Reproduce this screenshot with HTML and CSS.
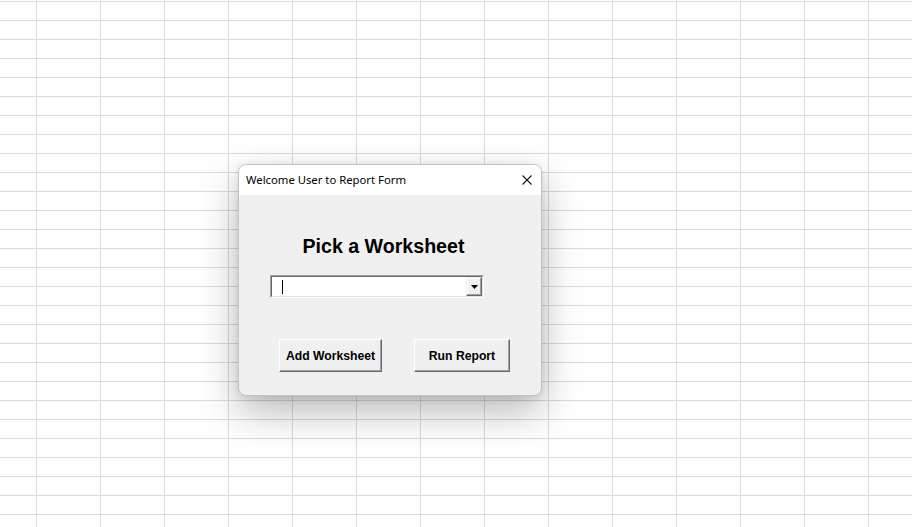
FILE: index.html
```html
<!DOCTYPE html>
<html lang="en">
<head>
<meta charset="utf-8">
<title>Welcome User to Report Form</title>
<link rel="stylesheet" href="styles.css">
</head>
<body>
<div class="sheet"></div>
<div class="dialog">
  <div class="titlebar">
    <span class="title-text">Welcome User to Report Form</span>
    <svg class="close" width="10" height="10" viewBox="0 0 10 10" aria-hidden="true">
      <path d="M0.5 0.5 L9.5 9.5 M9.5 0.5 L0.5 9.5" stroke="#1a1a1a" stroke-width="1.1" fill="none"/>
    </svg>
  </div>
  <div class="body">
    <div class="heading">Pick a Worksheet</div>
    <div class="combo">
      <div class="combo-inner">
        <div class="combo-field"><span class="caret"></span></div>
        <div class="combo-btn">
          <svg width="7" height="4" viewBox="0 0 7 4" aria-hidden="true"><path d="M0 0 H7 L3.5 4 Z" fill="#000"/></svg>
        </div>
      </div>
    </div>
    <div class="buttons">
      <div class="btn btn-add">Add Worksheet</div>
      <div class="btn btn-run">Run Report</div>
    </div>
  </div>
</div>
</body>
</html>
```

FILE: styles.css
```css
html, body {
  margin: 0;
  padding: 0;
  width: 912px;
  height: 527px;
  overflow: hidden;
}
body {
  background-color: #ffffff;
  background-image:
    linear-gradient(to right, #dadada 1px, transparent 1px),
    linear-gradient(to bottom, #dadada 1px, transparent 1px);
  background-size: 64px 19px;
  background-position: 36px 1px;
}
.dialog {
  position: absolute;
  left: 238px;
  top: 164px;
  width: 304px;
  height: 232px;
  box-sizing: border-box;
  border: 1px solid #c2c2c2;
  border-radius: 8px;
  background: #f0f0f0;
  overflow: hidden;
  box-shadow: 0 16px 40px rgba(0, 0, 0, 0.27), 0 2px 8px rgba(0, 0, 0, 0.10);
  display: flex;
  flex-direction: column;
}
.titlebar {
  height: 30px;
  background: #ffffff;
  display: flex;
  align-items: center;
  justify-content: space-between;
  padding: 0 9px 0 7px;
  flex: none;
}
.title-text {
  font-family: "Noto Sans", "Open Sans", sans-serif;
  font-size: 11.3px;
  color: #000;
  line-height: 14px;
}
.close {
  display: block;
}
.body {
  flex: 1;
  display: flex;
  flex-direction: column;
  padding-top: 40px;
}
.heading {
  font-family: "Liberation Sans", Arial, sans-serif;
  font-weight: bold;
  font-size: 19.6px;
  line-height: 23px;
  color: #000;
  text-align: center;
  padding-right: 13px;
}
.combo {
  margin: 17px 0 0 31px;
  width: 214px;
  height: 23px;
  box-sizing: border-box;
  border: 1px solid;
  border-color: #a0a0a0 #ffffff #ffffff #a0a0a0;
}
.combo-inner {
  height: 100%;
  box-sizing: border-box;
  border: 1px solid;
  border-color: #696969 #e3e3e3 #e3e3e3 #696969;
  background: #ffffff;
  display: flex;
}
.combo-field {
  flex: 1;
  display: flex;
  align-items: center;
  padding-left: 10px;
}
.caret {
  width: 1px;
  height: 14px;
  background: #000;
}
.combo-btn {
  width: 16px;
  box-sizing: border-box;
  border: 1px solid;
  border-color: #f0f0f0 #696969 #696969 #f0f0f0;
  box-shadow: inset -1px -1px #a0a0a0, inset 1px 1px #ffffff;
  background: #f0f0f0;
  display: flex;
  align-items: center;
  justify-content: center;
}
.combo-btn svg {
  display: block;
  margin-top: 1px;
}
.buttons {
  display: flex;
  gap: 32px;
  margin: 41px 0 0 40px;
}
.btn {
  height: 33px;
  box-sizing: border-box;
  border: 1px solid;
  border-color: #ffffff #696969 #696969 #ffffff;
  box-shadow: inset -1px -1px #a0a0a0;
  background: #f0f0f0;
  display: flex;
  align-items: center;
  justify-content: center;
  font-family: "Liberation Sans", Arial, sans-serif;
  font-weight: bold;
  font-size: 12.2px;
  color: #000;
}
.btn-add {
  width: 103px;
}
.btn-run {
  width: 96px;
}
```
